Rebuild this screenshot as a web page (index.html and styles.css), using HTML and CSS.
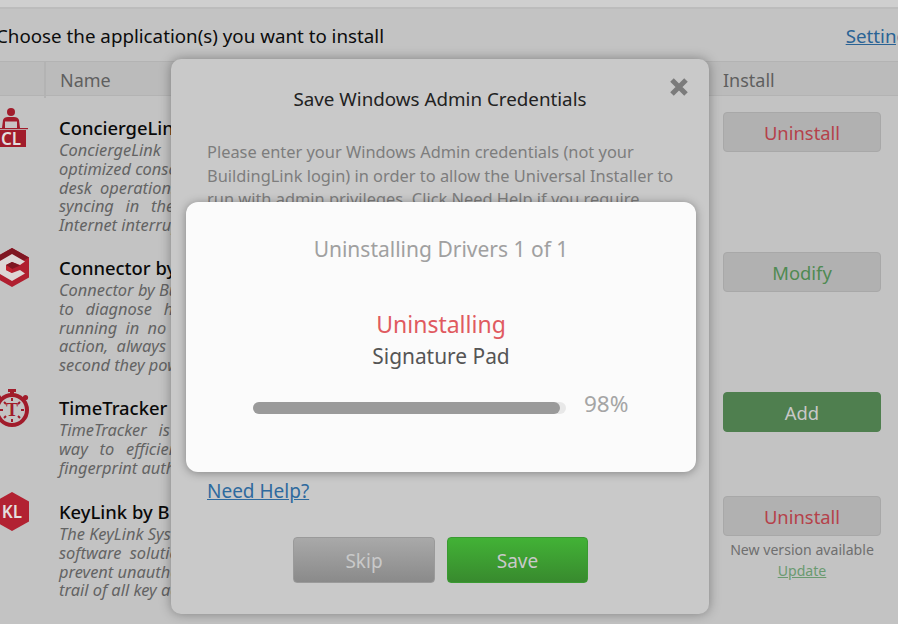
FILE: index.html
```html
<!DOCTYPE html>
<html lang="en">
<head>
    <meta charset="UTF-8">
    <meta name="viewport" content="width=device-width, initial-scale=1.0">
    <title>Universal Installer</title>
    <link rel="stylesheet" href="styles.css">
</head>
<body>
    <div class="topbar"></div>

    <div class="page">
        <div class="intro">
            <span>Choose the application(s) you want to install</span>
            <a href="#">Settings</a>
        </div>

        <div class="thead">
            <div class="th-icon"></div>
            <div class="th-name">Name</div>
            <div class="th-install">Install</div>
        </div>

        <div class="row row-tall">
            <svg class="app-icon" viewBox="0 0 40 40">
                <circle cx="18" cy="5" r="4" fill="#a11c2b"/>
                <path d="M9 21 L10 13 Q11 10 15 10 L21 10 Q25 10 26 13 L27 21 Z" fill="#a11c2b"/>
                <rect x="12" y="14.5" width="12" height="6.5" fill="#c9c4c4"/>
                <rect x="0" y="21" width="35" height="1.2" fill="#a11c2b"/>
                <rect x="0" y="23" width="33" height="17" fill="#a11c2b"/>
                <text x="18" y="37.5" class="icon-text">CL</text>
            </svg>
            <div class="app">
                <div class="app-name">ConciergeLink</div>
                <div class="desc">
                    <span>ConciergeLink</span>
                    <span>optimized console</span>
                    <span class="wide">desk operations</span>
                    <span class="wider">syncing in the</span>
                    <span>Internet interruptions.</span>
                </div>
            </div>
            <div class="action">
                <button class="btn btn-uninstall">Uninstall</button>
            </div>
        </div>

        <div class="row row-tall">
            <svg class="app-icon icon-low" viewBox="0 0 40 40">
                <path d="M19 0 L36 9.5 L36 29.5 L19 39 L2 29.5 L2 9.5 Z" fill="#b01f30"/>
                <path d="M19 0 L36 9.5 L19 19 L2 9.5 Z" fill="#7f1622"/>
                <path d="M19 6 L32 13.5 L27 17 L19 14 L13 17 L13 22 L19 25 L27 22 L32 25.5 L19 33 L6 25.5 L6 13.5 Z" fill="#ddd6d6"/>
                <path d="M19 14 L27 17.5 L19 21 L13 17 Z" fill="#7f1622"/>
                <path d="M13 17 L19 21 L19 25 L13 22 Z" fill="#c0212f"/>
            </svg>
            <div class="app">
                <div class="app-name">Connector by</div>
                <div class="desc">
                    <span>Connector by Building</span>
                    <span class="wider">to diagnose hardware</span>
                    <span class="wide">running in no time</span>
                    <span class="wide">action, always ready</span>
                    <span>second they power on.</span>
                </div>
            </div>
            <div class="action">
                <button class="btn btn-modify">Modify</button>
            </div>
        </div>

        <div class="row row-short">
            <svg class="app-icon icon-lower" viewBox="0 0 40 40">
                <rect x="15" y="0" width="8" height="3" fill="#a11c2b"/>
                <rect x="17" y="3" width="4" height="3" fill="#a11c2b"/>
                <circle cx="32.5" cy="8.5" r="2.6" fill="#a11c2b"/>
                <circle cx="5.5" cy="8.5" r="2.6" fill="#a11c2b"/>
                <circle cx="19" cy="21" r="15" fill="none" stroke="#a11c2b" stroke-width="4"/>
                <path d="M19 9 V12 M19 30 V33 M7 21 H10 M28 21 H31 M11 13 L13 15 M27 13 L25 15 M11 29 L13 27 M27 29 L25 27" stroke="#a11c2b" stroke-width="2"/>
                <text x="19" y="27" class="icon-serif">T</text>
            </svg>
            <div class="app">
                <div class="app-name">TimeTracker</div>
                <div class="desc">
                    <span class="wider">TimeTracker is the</span>
                    <span class="wider">way to efficiently</span>
                    <span>fingerprint authentication.</span>
                </div>
            </div>
            <div class="action">
                <button class="btn btn-add">Add</button>
            </div>
        </div>

        <div class="row row-last">
            <svg class="app-icon icon-low" viewBox="0 0 40 40">
                <path d="M19 0 L36 9.5 L36 29.5 L19 39 L2 29.5 L2 9.5 Z" fill="#b22232"/>
                <text x="19" y="26" class="icon-text">KL</text>
            </svg>
            <div class="app">
                <div class="app-name">KeyLink by B</div>
                <div class="desc">
                    <span>The KeyLink System</span>
                    <span class="wide">software solution</span>
                    <span>prevent unauthorized</span>
                    <span>trail of all key activity.</span>
                </div>
            </div>
            <div class="action">
                <button class="btn btn-uninstall">Uninstall</button>
                <div class="new-version">New version available</div>
                <a class="update" href="#">Update</a>
            </div>
        </div>
    </div>

    <div class="modal">
        <h2>Save Windows Admin Credentials</h2>
        <svg class="close" viewBox="0 0 20 20">
            <path d="M3 3 L17 17 M17 3 L3 17" stroke="#7b7b7b" stroke-width="5"/>
        </svg>
        <p>Please enter your Windows Admin credentials (not your BuildingLink login) in order to allow the Universal Installer to run with admin privileges. Click Need Help if you require</p>
        <a class="help" href="#">Need Help?</a>
        <div class="modal-buttons">
            <button class="btn-skip">Skip</button>
            <button class="btn-save">Save</button>
        </div>
    </div>

    <div class="progress-box">
        <div class="progress-title">Uninstalling Drivers 1 of 1</div>
        <div class="progress-state">Uninstalling</div>
        <div class="progress-item">Signature Pad</div>
        <div class="progress-line">
            <div class="track"><div class="fill" style="width: 98%"></div></div>
            <span class="percent">98%</span>
        </div>
    </div>
</body>
</html>
```

FILE: styles.css
```css
body {
    margin: 0;
    height: 624px;
    overflow: hidden;
    position: relative;
    font-family: "Noto Sans", Arial, sans-serif;
    background: #c3c3c3;
    color: #000;
}

.topbar {
    height: 9px;
    box-sizing: border-box;
    background: #cfcfcf;
    border-bottom: 2px solid #bcbcbc;
}

.page {
    margin-left: -20px;
    width: 938px;
}

.intro {
    display: flex;
    justify-content: space-between;
    height: 52px;
    padding: 15px 1px 0 16px;
    box-sizing: border-box;
    font-size: 18.75px;
    line-height: 24px;
    color: #0c0c0c;
}

.intro a {
    color: #2a6395;
}

.thead {
    display: grid;
    grid-template-columns: 66px 677px 195px;
    height: 35px;
    box-sizing: border-box;
    background: #bbb;
    border-top: 1px solid #b3b3b3;
    border-bottom: 1px solid #b3b3b3;
    font-size: 18px;
    line-height: 36px;
    color: #5f5f5f;
}

.th-icon {
    border-right: 2px solid #b3b3b3;
}

.th-name {
    padding-left: 14px;
}

.row {
    display: grid;
    grid-template-columns: 66px 677px 195px;
    box-sizing: border-box;
}

.row-tall {
    height: 140px;
}

.row-short {
    height: 104px;
}

.row-last {
    height: 130px;
}

.app-icon {
    width: 40px;
    height: 40px;
    margin: 11px 0 0 13px;
}

.icon-low {
    margin-top: 12px;
}

.icon-lower {
    margin-top: 13px;
}

.icon-text {
    font-family: "Noto Sans", Arial, sans-serif;
    font-size: 17px;
    font-weight: 600;
    fill: #e4dede;
    text-anchor: middle;
}

.icon-serif {
    font-family: "Liberation Serif", serif;
    font-size: 18px;
    font-weight: bold;
    fill: #a11c2b;
    text-anchor: middle;
}

.app {
    padding: 19px 0 0 13px;
}

.app-name {
    margin-bottom: 1px;
    font-size: 18.4px;
    font-weight: 500;
    line-height: 25px;
    color: #0a0a0a;
}

.desc {
    font-size: 16.4px;
    font-style: italic;
    line-height: 18.8px;
    color: #636363;
}

.desc span {
    display: block;
    white-space: nowrap;
}

.desc .wide {
    word-spacing: 4px;
}

.desc .wider {
    word-spacing: 7.5px;
}

.action {
    width: 158px;
    padding-top: 16px;
    text-align: center;
}

.btn {
    width: 158px;
    height: 40px;
    display: block;
    padding-top: 1px;
    border: 1px solid #a8a8a8;
    border-radius: 4px;
    background: #b1b1b1;
    font-family: inherit;
    font-size: 18.4px;
}

.btn-uninstall {
    color: #b5414a;
}

.btn-modify {
    color: #4f8a52;
}

.btn-add {
    background: #4f7f4f;
    border-color: #4f7f4f;
    color: #c8c8c8;
}

.new-version {
    margin-top: 4px;
    font-size: 14.1px;
    line-height: 20px;
    color: #6f6f6f;
}

.update {
    display: block;
    margin-top: 1px;
    font-size: 14.1px;
    line-height: 20px;
    color: #6a9a70;
}

.modal {
    position: absolute;
    top: 59px;
    left: 171px;
    width: 538px;
    height: 555px;
    box-sizing: border-box;
    padding: 0 36px;
    background: #c9c9c9;
    border-radius: 10px;
    box-shadow: 0 0 12px rgba(0, 0, 0, 0.35);
}

.modal h2 {
    margin: 28px 0 0;
    font-size: 18.8px;
    font-weight: 400;
    line-height: 24px;
    text-align: center;
    color: #222;
}

.close {
    position: absolute;
    top: 18px;
    right: 20px;
    width: 20px;
    height: 20px;
}

.modal p {
    margin: 29px -6px 0 0;
    font-size: 16.4px;
    line-height: 23.5px;
    color: #7d7d7d;
}

.help {
    display: block;
    margin-top: 267px;
    font-size: 19px;
    line-height: 26px;
    color: #2e6a9e;
}

.modal-buttons {
    display: flex;
    gap: 12px;
    margin-top: 33px;
    padding-left: 86px;
}

.modal-buttons button {
    width: 142px;
    height: 46px;
    padding-top: 3px;
    border-radius: 4px;
    font-family: inherit;
    font-size: 19px;
    color: #c9c9c9;
}

.btn-skip {
    border: 1px solid #9a9a9a;
    background: linear-gradient(#a9a9a9, #8a8a8a);
}

.modal-buttons .btn-save {
    width: 141px;
    border: 1px solid #3a9a32;
    background: linear-gradient(#42b236, #388a2e);
}

.progress-box {
    position: absolute;
    top: 202px;
    left: 186px;
    width: 510px;
    height: 270px;
    box-sizing: border-box;
    padding-top: 31px;
    background: #fbfbfb;
    border-radius: 12px;
    box-shadow: 0 1px 10px rgba(0, 0, 0, 0.35);
    text-align: center;
}

.progress-title {
    font-size: 21px;
    line-height: 32px;
    color: #a0a0a0;
}

.progress-state {
    margin-top: 43px;
    font-size: 23px;
    line-height: 32px;
    color: #e05a60;
}

.progress-item {
    margin-top: 1px;
    font-size: 20.9px;
    line-height: 30px;
    color: #555;
}

.progress-line {
    display: flex;
    align-items: center;
    gap: 18px;
    margin-top: 19px;
    padding-left: 67px;
}

.track {
    width: 313px;
    height: 12px;
    background: #e8e8e8;
    border-radius: 6px;
}

.fill {
    height: 100%;
    background: #9a9a9a;
    border-radius: 6px;
}

.percent {
    margin-bottom: 8px;
    font-size: 22.5px;
    line-height: 28px;
    color: #a5a5a5;
}
```
